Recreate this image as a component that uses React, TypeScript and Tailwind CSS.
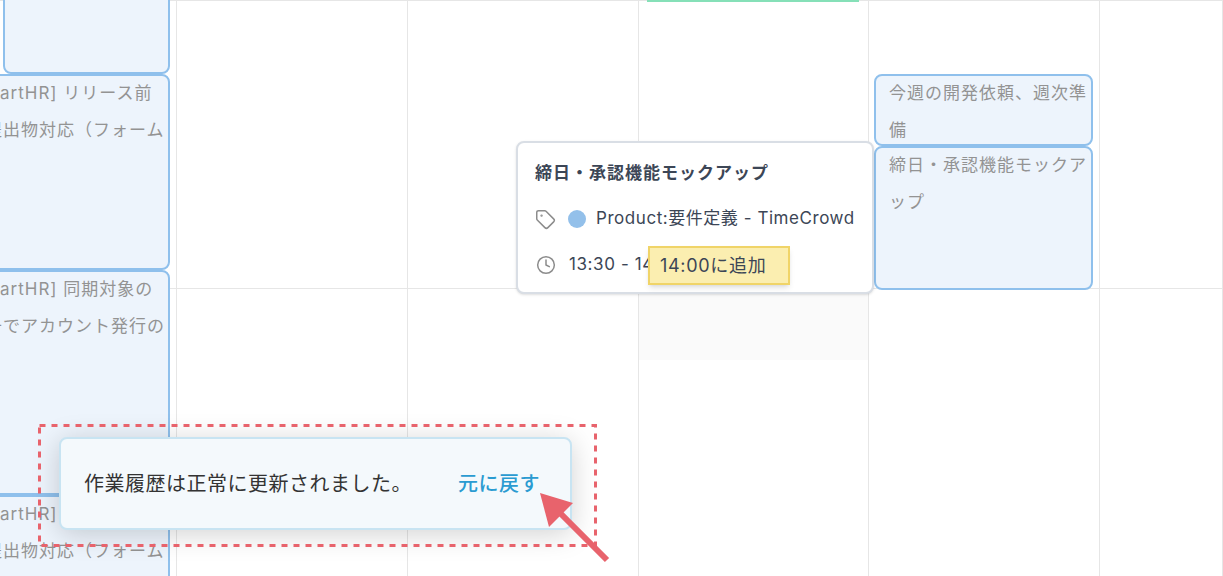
import { Clock, Tag } from "lucide-react";

const font = "font-['Inter','Noto_Sans_CJK_JP',sans-serif]";

const columnWidths = ["w-[177px]", "w-[231px]", "w-[231px]", "w-[230px]", "w-[231px]", "w-[123px]"];

function CalendarEvent({ className, lines }: { className: string; lines: string[] }) {
  return (
    <div
      className={`shrink-0 overflow-hidden rounded-[8px] border-2 border-[#8fc0ec] bg-[#edf4fc] text-[17px] leading-[36.5px] tracking-[1px] whitespace-nowrap text-[#939393] ${className}`}
    >
      <div className="-mt-[1px]">
        {lines.map((line) => (
          <div key={line}>{line}</div>
        ))}
      </div>
    </div>
  );
}

export default function App() {
  return (
    <div className={`relative h-[576px] w-[1223px] overflow-hidden bg-white ${font}`}>
      {/* calendar grid */}
      <div className="flex h-full">
        {columnWidths.map((w, i) => (
          <div key={i} className={`relative h-full shrink-0 border-r border-[#e6e6e6] ${w}`}>
            <div className="h-[289px] border-y border-[#e6e6e6]" />
            {i === 3 && <div className="h-[71px] bg-[#fafafa]" />}

            {i === 0 && (
              <div className="absolute top-[-20px] left-[-40px] flex w-[210px] flex-col items-end">
                <CalendarEvent className="h-[94px] w-[167px]" lines={[]} />
                <CalendarEvent
                  className="h-[196px] w-full pl-[3px] [&_div_div:nth-child(2)]:pl-[2px]"
                  lines={["[SmartHR] リリース前", "前提出物対応（フォーム"]}
                />
                <CalendarEvent
                  className="h-[225px] w-full pl-[3px] [&_div_div:nth-child(2)]:pl-[2px]"
                  lines={["[SmartHR] 同期対象の", "番号でアカウント発行の"]}
                />
                <CalendarEvent
                  className="h-[120px] w-full pl-[3px] [&_div_div:nth-child(2)]:pl-[2px]"
                  lines={["[SmartHR] リリース前提", "前提出物対応（フォーム"]}
                />
              </div>
            )}

            {i === 3 && <div className="absolute top-0 left-[8px] h-[2px] w-[212px] bg-[#86e0b8]" />}

            {i === 4 && (
              <div className="absolute top-[74px] left-[5px] flex w-[219px] flex-col">
                <CalendarEvent className="h-[72px] pl-[13px]" lines={["今週の開発依頼、週次準", "備"]} />
                <CalendarEvent className="h-[144px] pl-[13px]" lines={["締日・承認機能モックア", "ップ"]} />
              </div>
            )}
          </div>
        ))}
      </div>

      {/* popover */}
      <div className="absolute top-[141px] left-[516px] flex h-[153px] w-[358px] flex-col gap-[20px] rounded-[8px] border-2 border-[#d9dee5] bg-white pt-[17px] pl-[17px] text-[#3c4656] shadow-sm">
        <div className="text-[17px] leading-[26px] font-bold tracking-[1px]">締日・承認機能モックアップ</div>
        <div className="flex h-[26px] items-center text-[17px] tracking-[0.55px]">
          <Tag size={21} strokeWidth={1.7} className="text-[#8c8c8c]" />
          <span className="ml-[12px] h-[18px] w-[18px] rounded-full bg-[#93c0ea]" />
          <span className="ml-[10px]">Product:要件定義 - TimeCrowd</span>
        </div>
        <div className="flex h-[26px] items-center gap-[13px] pl-[1px] text-[17px] tracking-[0.6px]">
          <Clock size={20} strokeWidth={1.8} className="text-[#8c8c8c]" />
          <span>13:30 - 14:00</span>
        </div>

        {/* drag tooltip */}
        <div className="absolute top-[103px] left-[130px] flex h-[39px] w-[142px] items-center border-2 border-[#f0d468] bg-[#fbeeb0] pl-[10px] text-[18px] tracking-[0.7px] text-[#3c4656] shadow-md">
          14:00に追加
        </div>
      </div>

      {/* toast */}
      <div className="absolute top-[424px] left-[38px] h-[123px] w-[559px] pt-[13px] pl-[21px]">
        <div className="flex h-[93px] w-[513px] items-center gap-[46px] rounded-[8px] border-2 border-[#c8e4f2] bg-[#f4f9fc] pl-[23px] text-[20px] tracking-[0.5px] shadow-[0_4px_28px_rgba(0,0,0,0.18)]">
          <span className="text-[#333333]">作業履歴は正常に更新されました。</span>
          <span className="font-medium text-[#2a9bd1]">元に戻す</span>
        </div>
      </div>

      {/* red annotation */}
      <svg className="absolute inset-0" width="1223" height="576" viewBox="0 0 1223 576">
        <rect x="39.5" y="425.5" width="556" height="120" fill="none" stroke="#e8636c" strokeWidth="3" strokeDasharray="6 6" />
        <line x1="607" y1="560" x2="555" y2="508" stroke="#e8636c" strokeWidth="6" />
        <polygon points="540,493 573,503 549,527" fill="#e8636c" />
      </svg>
    </div>
  );
}
